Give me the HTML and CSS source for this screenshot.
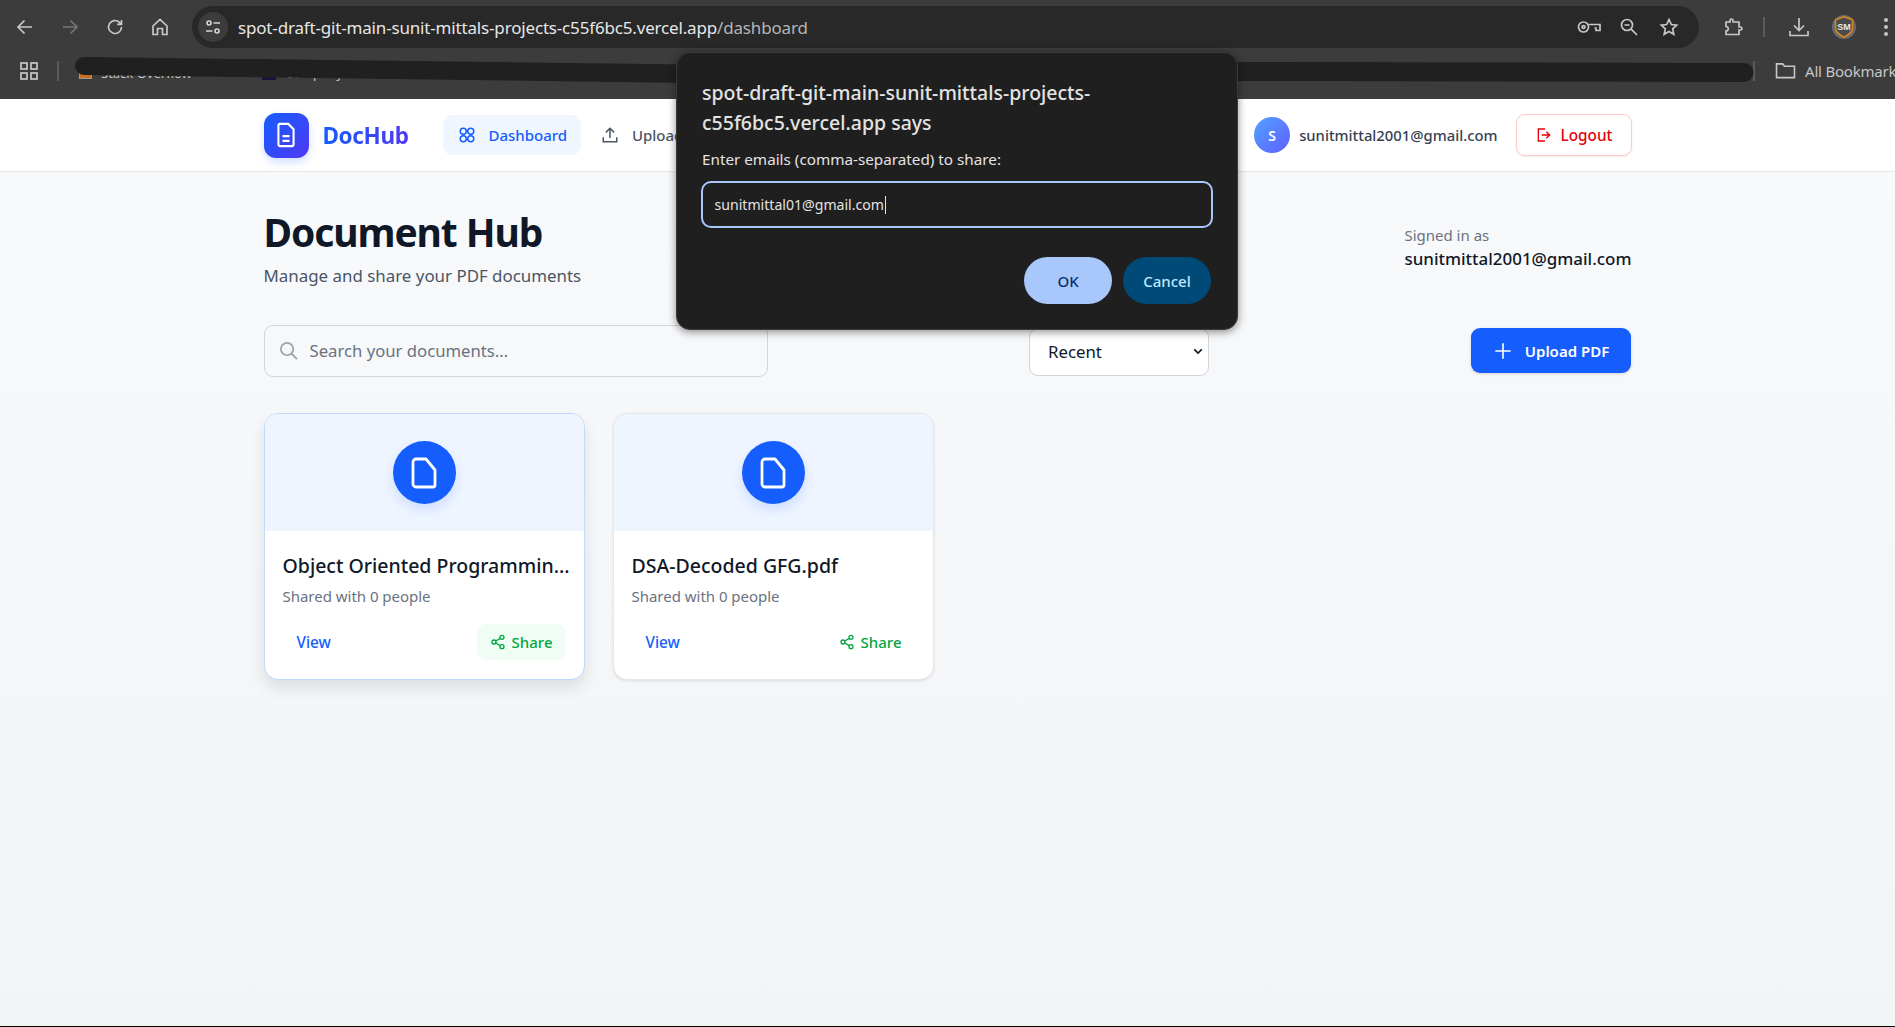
FILE: index.html
```html
<!DOCTYPE html>
<html lang="en">
<head>
<meta charset="utf-8">
<title>DocHub</title>
<link rel="stylesheet" href="styles.css">
</head>
<body>
<header class="chrome">
  <div class="toolbar">
    <div class="tool-nav">
      <svg class="ci" viewBox="0 0 20 20"><path d="M17 10H3.500M9.500 3.500 3 10l6.500 6.500"/></svg>
      <svg class="ci ci-dim" viewBox="0 0 20 20"><path d="M3 10h13.500M10.500 3.500 17 10l-6.500 6.500"/></svg>
      <svg class="ci" viewBox="0 0 20 20"><path d="M16.500 10a6.500 6.500 0 1 1-2-4.700L16.500 7.300M16.500 3v4.300h-4.300"/></svg>
      <svg class="ci" viewBox="0 0 20 20"><path d="M3 9 10 2.500 17 9v8.500h-4.500V11.500h-5v6H3z"/></svg>
    </div>
    <div class="omnibox">
      <span class="tune"><svg viewBox="0 0 20 20"><circle cx="6" cy="6" r="2"/><path d="M10.500 6H17M3 14h6.500"/><circle cx="14" cy="14" r="2"/></svg></span>
      <span class="url">spot-draft-git-main-sunit-mittals-projects-c55f6bc5.vercel.app<span class="url-dim">/dashboard</span></span>
      <span class="omni-icons">
        <svg class="ci ci-key" viewBox="0 0 24 14"><circle cx="6.500" cy="7" r="5"/><circle cx="6.500" cy="7" r="1.400"/><path d="M11.500 4.500H23v6h-4V8h-1.500"/></svg>
        <svg class="ci" viewBox="0 0 20 20"><circle cx="8" cy="8" r="5.500"/><path d="M5.500 8h5M12.200 12.200 18 18"/></svg>
        <svg class="ci" viewBox="0 0 20 20"><path d="m10 2.500 2.300 5 5.400.6-4 3.700 1.100 5.400-4.800-2.800-4.800 2.800 1.100-5.400-4-3.700 5.400-.6z"/></svg>
      </span>
    </div>
    <div class="tool-end">
      <svg class="ci" viewBox="0 0 20 20"><path d="M3 5h4V3.500a1.500 1.500 0 0 1 3 0V5h6v5h1.500a1.500 1.500 0 0 1 0 3H16v4.500H3V14a2 2 0 0 0 0-4.500z"/></svg>
      <span class="vsep"></span>
      <svg class="ci ci-download" viewBox="0 0 22 22"><path d="M11 2v12M6 9.500l5 5 5-5M2 15v4.500h18V15"/></svg>
      <span class="profile"><svg viewBox="0 0 20 20"><path class="shield" d="M10 1.500 17 4v7c0 3.500-3.500 5.500-7 7.500C6.500 16.500 3 14.500 3 11V4z"/><text class="shield-text" x="10" y="12.500">SM</text></svg></span>
      <span class="dots"><i></i><i></i><i></i></span>
    </div>
  </div>
  <div class="bookmarks">
    <svg class="ci ci-apps" viewBox="0 0 18 18"><rect x="1" y="1" width="6" height="6"/><rect x="11" y="1" width="6" height="6"/><rect x="1" y="11" width="6" height="6"/><rect x="11" y="11" width="6" height="6"/></svg>
    <span class="vsep"></span>
    <span class="bm"><i class="bm-favicon"></i>Stack Overflow</span>
    <span class="bm bm-second"><i class="bm-favicon-dark"></i>Company</span>
    <span class="bm-spacer"></span>
    <span class="vsep vsep-end"></span>
    <svg class="ci ci-folder" viewBox="0 0 22 18"><path d="M1.500 2h6.500l2 2.500h10.500V16.500h-19z"/></svg>
    <span class="all-bm">All Bookmarks</span>
    <svg class="scribble" viewBox="0 0 1895 99" aria-hidden="true"><path d="M84 57 690 64.500V83L84 75a9 9 0 0 1 0-18z"/><path d="M1230 62 1744 63a9.500 9.500 0 0 1 0 19L1230 81z"/></svg>
  </div>
</header>

<nav class="topnav">
  <div class="wrap topnav-row">
    <div class="nav-left">
      <span class="logo"><svg viewBox="0 0 24 24"><path d="M6 2.500h8l4.500 4.500v13a1.500 1.500 0 0 1-1.500 1.500H7A1.500 1.500 0 0 1 5.500 20V4A1.500 1.500 0 0 1 7 2.500z"/><path d="M9 13h6M9 17h6"/></svg></span>
      <span class="brand">DocHub</span>
      <a class="nav-item nav-active"><svg viewBox="0 0 24 24"><circle cx="7" cy="7" r="4"/><circle cx="17" cy="7" r="4"/><circle cx="7" cy="17" r="4"/><circle cx="17" cy="17" r="4"/></svg>Dashboard</a>
      <a class="nav-item"><svg viewBox="0 0 24 24"><path d="M3 15v6h18v-6M12 16V3M6.500 8.500 12 3l5.500 5.500"/></svg>Upload</a>
    </div>
    <div class="nav-right">
      <span class="avatar">S</span>
      <span class="nav-email">sunitmittal2001@gmail.com</span>
      <button class="logout"><svg viewBox="0 0 24 24"><path d="M14 4V3H5v18h9v-1M10 12h12M17 7l5 5-5 5"/></svg>Logout</button>
    </div>
  </div>
</nav>

<main class="wrap">
  <section class="head">
    <div>
      <h1>Document Hub</h1>
      <p class="sub">Manage and share your PDF documents</p>
    </div>
    <div class="signed">
      <div class="signed-label">Signed in as</div>
      <div class="signed-email">sunitmittal2001@gmail.com</div>
    </div>
  </section>
  <section class="controls">
    <div class="search">
      <svg viewBox="0 0 20 20"><circle cx="8.500" cy="8.500" r="6.500"/><path d="m13.500 13.500 5.500 5.500"/></svg>
      <span>Search your documents...</span>
    </div>
    <div class="sort">Recent<svg viewBox="0 0 12 8"><path d="M1.500 1.500 6 6l4.500-4.500"/></svg></div>
    <button class="upload"><svg viewBox="0 0 20 20"><path d="M10 1.500v17M1.500 10h17"/></svg>Upload PDF</button>
  </section>
  <section class="grid">
    <article class="card card-hover">
      <div class="thumb"><span class="disc"><svg viewBox="0 0 26 32"><path d="M5 2h10l9 11v15a2 2 0 0 1-2 2H5a3 3 0 0 1-3-3V5a3 3 0 0 1 3-3z"/></svg></span></div>
      <div class="card-body">
        <h2>Object Oriented Programmin...</h2>
        <p>Shared with 0 people</p>
        <div class="actions">
          <a class="view">View</a>
          <a class="share share-hover"><svg viewBox="0 0 24 24"><circle cx="18" cy="5" r="3"/><circle cx="6" cy="12" r="3"/><circle cx="18" cy="19" r="3"/><path d="m8.600 13.500 6.800 4M15.400 6.500l-6.800 4"/></svg>Share</a>
        </div>
      </div>
    </article>
    <article class="card">
      <div class="thumb"><span class="disc"><svg viewBox="0 0 26 32"><path d="M5 2h10l9 11v15a2 2 0 0 1-2 2H5a3 3 0 0 1-3-3V5a3 3 0 0 1 3-3z"/></svg></span></div>
      <div class="card-body">
        <h2>DSA-Decoded GFG.pdf</h2>
        <p>Shared with 0 people</p>
        <div class="actions">
          <a class="view">View</a>
          <a class="share"><svg viewBox="0 0 24 24"><circle cx="18" cy="5" r="3"/><circle cx="6" cy="12" r="3"/><circle cx="18" cy="19" r="3"/><path d="m8.600 13.500 6.800 4M15.400 6.500l-6.800 4"/></svg>Share</a>
        </div>
      </div>
    </article>
  </section>
</main>

<div class="dialog" role="dialog">
  <div class="dialog-title">spot-draft-git-main-sunit-mittals-projects-<br>c55f6bc5.vercel.app says</div>
  <div class="dialog-msg">Enter emails (comma-separated) to share:</div>
  <div class="dialog-input"><span>sunitmittal01@gmail.com</span><i class="caret"></i></div>
  <div class="dialog-btns">
    <button class="btn-ok">OK</button>
    <button class="btn-cancel">Cancel</button>
  </div>
</div>
</body>
</html>
```
FILE: styles.css
```css
* { box-sizing: border-box; }
html, body { margin: 0; height: 100%; }
body {
  height: 1027px;
  overflow: hidden;
  display: flex;
  flex-direction: column;
  position: relative;
  font-family: "Noto Sans", "Open Sans", sans-serif;
  background: linear-gradient(#f9fafc, #f3f4f6);
  border-bottom: 1px solid #000;
  color: #101828;
}
h1, h2, p { margin: 0; }
button { font-family: inherit; cursor: pointer; }

/* browser chrome */
.chrome { height: 99px; background: #3c3c3c; flex: none; position: relative; }
.toolbar { height: 48px; padding-top: 6px; display: flex; align-items: stretch; }
.ci { fill: none; stroke: #c7c7c7; stroke-width: 1.700; width: 20px; height: 20px; flex: none; }
.ci-dim { stroke: #757575; }
.tool-nav { width: 192px; padding: 0 0 0 15px; display: flex; align-items: center; gap: 25px; }
.omnibox {
  width: 1507px;
  background: #282828;
  border-radius: 21px;
  display: flex;
  align-items: center;
  padding: 0 20px 0 6px;
}
.tune { width: 30px; height: 30px; border-radius: 50%; background: #3c3c3c; display: flex; align-items: center; justify-content: center; }
.tune svg { width: 20px; height: 20px; fill: none; stroke: #d6d6d6; stroke-width: 1.600; }
.url { margin-left: 10px; color: #e6e6e6; font-size: 17px; letter-spacing: -0.17px; white-space: nowrap; }
.url-dim { color: #b5b5b5; }
.omni-icons { margin-left: auto; display: flex; align-items: center; gap: 20px; }
.ci-key { width: 24px; height: 14px; margin-right: -2px; }
.tool-end { flex: 1; display: flex; align-items: center; padding-left: 24px; gap: 11px; }
.vsep { width: 2px; height: 20px; background: #5a5a5a; flex: none; }
.tool-end .vsep { margin: 0 12px 0 9px; }
.ci-download { width: 22px; height: 22px; }
.profile { width: 24px; height: 24px; border-radius: 50%; background: #6b6b6b; margin-left: 11px; display: flex; }
.profile svg { width: 24px; height: 24px; }
.shield { fill: #4a4a4a; stroke: #d98a1e; stroke-width: 1.200; }
.shield-text { fill: #e8e8e8; font-size: 7.500px; font-weight: 700; text-anchor: middle; font-family: "Liberation Sans", sans-serif; }
.dots { display: flex; flex-direction: column; gap: 3px; margin-left: 17px; }
.dots i { width: 4px; height: 4px; border-radius: 50%; background: #c7c7c7; }
.bookmarks { height: 51px; display: flex; align-items: center; padding: 0 0 6px 20px; }
.ci-apps { width: 18px; height: 18px; }
.bookmarks > .vsep { margin-left: 19px; height: 20px; }
.bm { font-size: 13px; color: #c7c7c7; display: flex; align-items: center; gap: 9px; margin: 4px 0 0 20px; white-space: nowrap; }
.bm-second { margin-left: 70px; }
.bm-favicon { width: 13px; height: 13px; background: #c5701f; border: 1px solid #999; }
.bm-favicon-dark { width: 14px; height: 14px; background: #14143c; }
.bm-spacer { flex: 1; }
.bookmarks > .vsep-end { margin: 0; width: 2px; height: 20px; }
.ci-folder { width: 21px; height: 17px; margin-left: 20px; }
.all-bm { color: #c7c7c7; font-size: 15px; margin-left: 9px; width: 90px; white-space: nowrap; letter-spacing: -0.2px; }
.scribble { position: absolute; left: 0; top: 0; width: 1895px; height: 99px; fill: #202020; pointer-events: none; }

/* app */
.wrap { width: 1368px; margin: 0 auto; }
.topnav { height: 73px; background: #fff; border-bottom: 1px solid #e5e7eb; flex: none; }
.topnav-row { height: 100%; display: flex; justify-content: space-between; align-items: center; }
.nav-left, .nav-right { display: flex; align-items: center; }
.logo {
  width: 45px; height: 45px; border-radius: 12px;
  background: linear-gradient(135deg, #155dfc, #4f39f6);
  box-shadow: 0 4px 8px rgba(21, 93, 252, .2);
  display: flex; align-items: center; justify-content: center;
}
.logo svg { width: 28px; height: 28px; fill: none; stroke: #fff; stroke-width: 1.800; }
.brand {
  margin-left: 14px; font-size: 22.500px; font-weight: 700; letter-spacing: -0.35px;
  background: linear-gradient(90deg, #155dfc, #4f39f6);
  -webkit-background-clip: text; background-clip: text; color: transparent;
}
.nav-item {
  height: 40px; display: flex; align-items: center; gap: 13px;
  padding: 0 14px 0 15px; font-size: 15px; font-weight: 500; color: #4a5565; border-radius: 9px;
  letter-spacing: -0.03px;
}
.nav-item svg { width: 18px; height: 18px; fill: none; stroke: currentColor; stroke-width: 2; }
.nav-active { margin-left: 34px; background: #eff6ff; color: #155dfc; }
.nav-item + .nav-item { margin-left: 5px; }
.avatar {
  width: 36px; height: 36px; border-radius: 50%;
  background: linear-gradient(135deg, #51a2ff, #615fff);
  color: #fff; font-size: 14px; font-weight: 600;
  display: flex; align-items: center; justify-content: center;
}
.nav-email { margin-left: 9px; font-size: 14.800px; font-weight: 500; color: #364153; }
.logout {
  margin-left: 18px; width: 116px; height: 42px;
  display: flex; align-items: center; justify-content: center; gap: 10px;
  background: #fff; border: 1px solid #ffc9c9; border-radius: 9px;
  box-shadow: 0 1px 2px rgba(0, 0, 0, .08);
  color: #e7000b; font-size: 15.300px; font-weight: 500;
}
.logout svg { width: 16px; height: 16px; fill: none; stroke: currentColor; stroke-width: 2; }

main { flex: 1; }
.head { display: flex; justify-content: space-between; padding-top: 37px; }
h1 { font-size: 39px; font-weight: 700; line-height: 46px; letter-spacing: -1.100px; color: #101828; }
.sub { margin-top: 8px; font-size: 16.900px; color: #4a5565; line-height: 26px; }
.signed { padding-top: 14px; }
.signed-label { font-size: 15px; color: #6a7282; line-height: 24px; }
.signed-email { font-size: 16.950px; font-weight: 500; line-height: 24px; color: #101828; }
.controls { display: flex; justify-content: space-between; align-items: flex-start; margin-top: 36px; padding-right: 1px; }
.search {
  width: 504px; height: 52px; border: 1px solid #d1d5dc; border-radius: 9px;
  display: flex; align-items: center; padding: 0 0 2px 14px; gap: 12px;
  color: #6a7282; font-size: 16.700px;
}
.search svg { width: 19px; height: 19px; fill: none; stroke: #99a1af; stroke-width: 1.800; }
.sort {
  width: 180px; height: 48px; margin-top: 3px; border: 1px solid #d1d5dc; border-radius: 9px;
  display: flex; align-items: center; justify-content: space-between; padding: 0 4px 2px 18px;
  font-size: 16.800px; color: #101828; background: #fff;
}
.sort svg { width: 10px; height: 7px; fill: none; stroke: #101828; stroke-width: 2; margin-right: 1px; }
.upload {
  width: 160px; height: 45px; margin-top: 3px; border: 0; border-radius: 9px;
  background: #155dfc; color: #fff; font-size: 15px; font-weight: 600;
  display: flex; align-items: center; justify-content: center; gap: 13px;
  box-shadow: 0 1px 3px rgba(0, 0, 0, .15);
  padding: 0 0 0 2px;
}
.upload svg { width: 18px; height: 18px; fill: none; stroke: #fff; stroke-width: 1.800; }
.grid { display: grid; grid-template-columns: repeat(4, 1fr); gap: 28px; margin-top: 36px; }
.card {
  height: 267px; background: #fff; border: 1px solid #e5e7eb; border-radius: 14px; overflow: hidden;
  box-shadow: 0 1px 3px rgba(0, 0, 0, .1);
}
.card-hover { border-color: #bedbff; box-shadow: 0 8px 16px rgba(0, 0, 0, .1); }
.thumb { height: 117px; background: #eff5ff; display: flex; align-items: center; justify-content: center; }
.disc {
  width: 63px; height: 63px; border-radius: 50%; background: #155dfc;
  display: flex; align-items: center; justify-content: center;
  box-shadow: 0 6px 12px rgba(21, 93, 252, .15);
}
.disc svg { width: 26px; height: 32px; fill: none; stroke: #fff; stroke-width: 2.800; stroke-linejoin: round; }
.card-body { padding: 21px 18px 0 18px; }
h2 { font-size: 19.500px; font-weight: 500; line-height: 28px; color: #101828; white-space: nowrap; }
.card-body p { font-size: 15px; line-height: 24px; color: #6a7282; margin-top: 4px; letter-spacing: -0.02px; }
.actions { display: flex; justify-content: space-between; align-items: center; margin-top: 16px; }
.view { padding: 0 13px 0 14px; font-size: 15.300px; font-weight: 500; color: #155dfc; }
.share {
  height: 36px; padding: 0 13px; display: flex; align-items: center; gap: 6px; border-radius: 9px;
  color: #00a63e; font-size: 15px; font-weight: 500;
}
.share svg { width: 16px; height: 16px; fill: none; stroke: currentColor; stroke-width: 2; }
.share-hover { background: #f0fdf4; }

/* dialog */
.dialog {
  position: absolute; left: 676px; top: 52px; width: 562px; height: 278px;
  background: #1f1f1f; border: 1px solid #3a3a3a; border-radius: 14px;
  box-shadow: 0 2px 8px rgba(0, 0, 0, .45);
  padding: 25px 24px 0 24px; color: #e3e3e3;
}
.dialog-title { font-size: 19.500px; font-weight: 500; line-height: 30px; padding-left: 1px; }
.dialog-msg { font-size: 15.250px; margin-top: 9px; line-height: 24px; padding-left: 1px; }
.dialog-input {
  margin-top: 10px; width: 512px; height: 47px; border: 2.500px solid #a8c7fa; border-radius: 10px;
  display: flex; align-items: center; padding-left: 11.500px; font-size: 14.100px; color: #e3e3e3;
}
.caret { width: 1px; height: 18px; background: #e3e3e3; margin-left: 1px; }
.dialog-btns { display: flex; justify-content: flex-end; gap: 11px; margin-top: 29px; padding-right: 2px; }
.dialog-btns button { width: 88px; height: 47px; border: 0; border-radius: 24px; font-size: 15px; font-weight: 500; }
.btn-ok { background: #a8c7fa; color: #062e6f; }
.btn-cancel { background: #004a77; color: #c2e7ff; }
```
